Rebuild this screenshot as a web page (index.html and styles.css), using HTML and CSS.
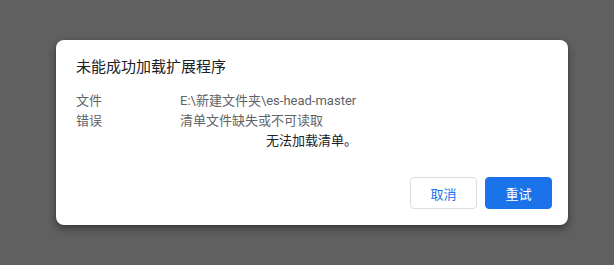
FILE: index.html
```html
<!DOCTYPE html>
<html lang="zh-CN">
<head>
<meta charset="utf-8">
<link rel="stylesheet" href="styles.css">
</head>
<body>
<div class="overlay">
  <div class="dialog">
    <div class="title">未能成功加载扩展程序</div>
    <div class="rows">
      <div class="row"><span class="label">文件</span><span class="value">E:\新建文件夹\es-head-master</span></div>
      <div class="row"><span class="label">错误</span><span class="value">清单文件缺失或不可读取</span></div>
      <div class="row"><span class="label"></span><span class="value extra">无法加载清单。</span></div>
    </div>
    <div class="actions">
      <button class="btn cancel">取消</button>
      <button class="btn retry">重试</button>
    </div>
  </div>
</div>
</body>
</html>
```
FILE: styles.css
```css
html, body {
  margin: 0;
  padding: 0;
  width: 614px;
  height: 265px;
  overflow: hidden;
}
body {
  background: #5f605f;
  font-family: Roboto, "Noto Sans CJK SC", sans-serif;
}
.overlay {
  padding: 40px 0 0 56px;
}
.dialog {
  width: 512px;
  height: 185px;
  box-sizing: border-box;
  background: #fff;
  border-radius: 8px;
  box-shadow: 0 4px 10px rgba(0,0,0,0.35), 0 1px 3px rgba(0,0,0,0.2);
  padding: 16px 16px 16px 20px;
  display: flex;
  flex-direction: column;
}
.title {
  font-size: 15px;
  line-height: 22px;
  color: #202124;
}
.rows {
  margin-top: 13px;
  font-size: 13px;
  line-height: 20px;
  color: #5f6368;
}
.row {
  display: flex;
}
.label {
  width: 104px;
  flex: none;
}
.value.extra {
  padding-left: 86px;
  color: #202124;
}
.actions {
  margin-top: auto;
  display: flex;
  justify-content: flex-end;
  gap: 8px;
}
.btn {
  width: 67px;
  height: 32px;
  box-sizing: border-box;
  border-radius: 4px;
  font-family: Roboto, "Noto Sans CJK SC", sans-serif;
  font-size: 13px;
  cursor: pointer;
  padding: 0;
}
.cancel {
  background: #fff;
  border: 1px solid #dadce0;
  color: #1a73e8;
}
.retry {
  background: #1a73e8;
  border: 1px solid #1a73e8;
  color: #fff;
}
```
